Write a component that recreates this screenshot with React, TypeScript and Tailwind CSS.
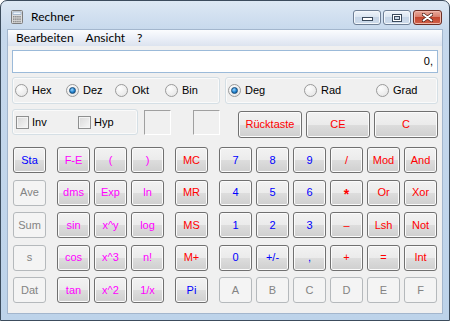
import React from "react";

type Tone = "b" | "m" | "r" | "d";
type Key = [string, Tone];

const tone: Record<Tone, string> = {
  b: "text-[#0000ff]",
  m: "text-[#ff00ff]",
  r: "text-[#ff0000]",
  d: "text-[#838383]",
};

const staKeys: Key[] = [["Sta", "b"], ["Ave", "d"], ["Sum", "d"], ["s", "d"], ["Dat", "d"]];
const fnKeys: Key[] = [
  ["F-E", "m"], ["(", "m"], [")", "m"],
  ["dms", "m"], ["Exp", "m"], ["ln", "m"],
  ["sin", "m"], ["x^y", "m"], ["log", "m"],
  ["cos", "m"], ["x^3", "m"], ["n!", "m"],
  ["tan", "m"], ["x^2", "m"], ["1/x", "m"],
];
const memKeys: Key[] = [["MC", "r"], ["MR", "r"], ["MS", "r"], ["M+", "r"], ["Pi", "b"]];
const numKeys: Key[] = [
  ["7", "b"], ["8", "b"], ["9", "b"], ["/", "r"], ["Mod", "r"], ["And", "r"],
  ["4", "b"], ["5", "b"], ["6", "b"], ["*", "r"], ["Or", "r"], ["Xor", "r"],
  ["1", "b"], ["2", "b"], ["3", "b"], ["–", "r"], ["Lsh", "r"], ["Not", "r"],
  ["0", "b"], ["+/-", "b"], [",", "b"], ["+", "r"], ["=", "r"], ["Int", "r"],
  ["A", "d"], ["B", "d"], ["C", "d"], ["D", "d"], ["E", "d"], ["F", "d"],
];

function Btn({ label, t, className = "" }: { label: string; t: Tone; className?: string }) {
  const off = t === "d";
  return (
    <div
      className={`flex items-center justify-center rounded-[3px] border leading-none ${tone[t]} ${
        label === "*" ? "pt-[3px] text-[14px] font-bold" : "text-[11px]"
      } ${
        off
          ? "border-[#b5b9bc] bg-[#f4f4f4]"
          : "border-[#707070] bg-[linear-gradient(#f2f2f2,#ebebeb_50%,#dddddd_50%,#cfcfcf)] shadow-[inset_0_0_0_1px_#fbfbfb]"
      } ${className}`}
    >
      {label}
    </div>
  );
}

function Radio({ on, label, w }: { on?: boolean; label: string; w: string }) {
  return (
    <div className={`flex items-center ${w}`}>
      <span className="flex h-[13px] w-[13px] items-center justify-center rounded-full border border-[#9a9a9a] bg-[radial-gradient(circle_at_35%_30%,#fdfdfd,#e2e2e2)]">
        {on && (
          <span className="h-[7px] w-[7px] rounded-full border border-[#1a4c78] bg-[radial-gradient(circle_at_40%_35%,#9bd6ff,#1f82cf_55%,#0b4a82)]" />
        )}
      </span>
      <span className="ml-[4px] text-[11px] text-black">{label}</span>
    </div>
  );
}

function Check({ label, w }: { label: string; w: string }) {
  return (
    <div className={`flex items-center ${w}`}>
      <span className="h-[13px] w-[13px] border border-[#8e8f8f] bg-[linear-gradient(135deg,#d8d8d8,#f7f7f7)] shadow-[inset_0_0_0_1px_#f4f4f4]" />
      <span className="ml-[3px] text-[11px] text-black">{label}</span>
    </div>
  );
}

function CalcIcon() {
  return (
    <svg width="12" height="14" viewBox="0 0 12 14">
      <rect x="0.5" y="0.5" width="11" height="13" rx="1" fill="#dcdcdc" stroke="#7d7d7d" />
      <rect x="2" y="2" width="8" height="2.5" fill="#eef5fc" stroke="#7f9bbb" strokeWidth="0.6" />
      {[0, 1, 2].map((r) =>
        [0, 1, 2, 3].map((c) => (
          <rect key={`${r}-${c}`} x={2 + c * 2.1} y={6 + r * 2.4} width="1.5" height="1.5" fill="#8a8a8a" />
        ))
      )}
    </svg>
  );
}

export default function App() {
  return (
    <div
      className="flex h-[321px] w-[450px] flex-col overflow-hidden rounded-t-[7px] border border-[#3c4c5d] bg-[linear-gradient(#dde8f4,#c6d8ec_30px,#bdd3ea)]"
      style={{ fontFamily: '"Liberation Sans", Arial, sans-serif' }}
    >
      {/* title bar */}
      <div className="flex h-[28px] items-start">
        <div className="ml-[10px] mt-[9px]">
          <CalcIcon />
        </div>
        <div className="ml-[8px] mt-[9px] text-[12px] leading-[14px] text-black" style={{ fontFamily: "Lato, sans-serif" }}>
          Rechner
        </div>
        <div className="ml-auto mr-[7px] mt-[9px] flex gap-[2px]">
          <div className="relative h-[15px] w-[28px] rounded-[3px] border border-[#6f7f95] bg-[linear-gradient(#eef3f9,#d9e4f0_50%,#c6d5e7_50%,#cddbeb)] shadow-[inset_0_0_0_1px_#f3f7fb]">
            <span className="absolute left-[8px] top-[6px] h-[4px] w-[11px] border border-[#3b4a5c] bg-white" />
          </div>
          <div className="relative h-[15px] w-[28px] rounded-[3px] border border-[#6f7f95] bg-[linear-gradient(#eef3f9,#d9e4f0_50%,#c6d5e7_50%,#cddbeb)] shadow-[inset_0_0_0_1px_#f3f7fb]">
            <span className="absolute left-[8px] top-[3px] flex h-[8px] w-[10px] items-center justify-center border border-[#3b4a5c] bg-white">
              <span className="h-[4px] w-[6px] border border-[#3b4a5c] bg-[#c9d6e6]" />
            </span>
          </div>
          <div className="relative flex h-[15px] w-[29px] items-center justify-center rounded-[3px] border border-[#6b2e25] bg-[linear-gradient(#e9a99b,#d77b68_50%,#c4472f_50%,#d0604a)] shadow-[inset_0_0_0_1px_#f0b8ab]">
            <svg width="11" height="9" viewBox="0 0 11 9">
              <path d="M1.5 1.5 L9.5 7.5 M9.5 1.5 L1.5 7.5" stroke="#4a1c14" strokeWidth="3.4" strokeLinecap="round" />
              <path d="M1.5 1.5 L9.5 7.5 M9.5 1.5 L1.5 7.5" stroke="#ffffff" strokeWidth="2" strokeLinecap="round" />
            </svg>
          </div>
        </div>
      </div>

      {/* client */}
      <div className="mx-[6px] flex flex-1 flex-col border border-[#a3b6cd] bg-[#f0f0f0]">
        <div
          className="flex h-[16px] items-center gap-[12px] bg-[linear-gradient(#fbfcfe,#e8edf6_60%,#dce3ef)] pl-[8px] text-[12px] text-black"
          style={{ fontFamily: "Lato, sans-serif" }}
        >
          <span>Bearbeiten</span>
          <span>Ansicht</span>
          <span>?</span>
        </div>

        <div className="flex flex-col px-[4px] pt-[4px]">
          <div className="flex h-[23px] items-center justify-end border border-[#9bbad9] bg-white pr-[4px] text-[11px] text-black">
            0,
          </div>

          <div className="mt-[4px] flex h-[27px] gap-[5px]">
            <div className="flex w-[208px] items-center rounded-[3px] border border-[#d5dfe5] pl-[2px] shadow-[inset_0_0_0_1px_#fafafa]">
              <Radio label="Hex" w="w-[51px]" />
              <Radio label="Dez" on w="w-[49px]" />
              <Radio label="Okt" w="w-[50px]" />
              <Radio label="Bin" w="w-[40px]" />
            </div>
            <div className="flex flex-1 items-center rounded-[3px] border border-[#d5dfe5] pl-[2px] shadow-[inset_0_0_0_1px_#fafafa]">
              <Radio label="Deg" on w="w-[76px]" />
              <Radio label="Rad" w="w-[72px]" />
              <Radio label="Grad" w="w-[50px]" />
            </div>
          </div>

          <div className="mt-[5px] flex h-[29px] items-start">
            <div className="flex h-[26px] w-[126px] items-center rounded-[3px] border border-[#d5dfe5] pl-[3px] shadow-[inset_0_0_0_1px_#fafafa]">
              <Check label="Inv" w="w-[62px]" />
              <Check label="Hyp" w="w-[50px]" />
            </div>
            <div className="ml-[6px] mt-[1px] h-[25px] w-[27px] border border-[#a0a0a0] border-b-white border-r-white" />
            <div className="ml-[22px] mt-[1px] h-[25px] w-[27px] border border-[#a0a0a0] border-b-white border-r-white" />
            <div className="ml-auto mt-[2px] flex gap-[4px]">
              <Btn label="Rücktaste" t="r" className="h-[27px] w-[64px]" />
              <Btn label="CE" t="r" className="h-[27px] w-[64px]" />
              <Btn label="C" t="r" className="h-[27px] w-[64px]" />
            </div>
          </div>

          <div className="ml-[1px] mt-[9px] flex gap-[11px]">
            <div className="grid grid-cols-[33px] gap-y-[6.5px]">
              {staKeys.map(([l, t]) => (
                <Btn key={l} label={l} t={t} className="h-[26px]" />
              ))}
            </div>
            <div className="grid grid-cols-[repeat(3,33px)] gap-x-[4px] gap-y-[6.5px]">
              {fnKeys.map(([l, t]) => (
                <Btn key={l} label={l} t={t} className="h-[26px]" />
              ))}
            </div>
            <div className="grid grid-cols-[33px] gap-y-[6.5px]">
              {memKeys.map(([l, t]) => (
                <Btn key={l} label={l} t={t} className="h-[26px]" />
              ))}
            </div>
            <div className="grid grid-cols-[repeat(6,33px)] gap-x-[4px] gap-y-[6.5px]">
              {numKeys.map(([l, t]) => (
                <Btn key={l} label={l} t={t} className="h-[26px]" />
              ))}
            </div>
          </div>
        </div>
      </div>
      <div className="h-[6px]" />
    </div>
  );
}
